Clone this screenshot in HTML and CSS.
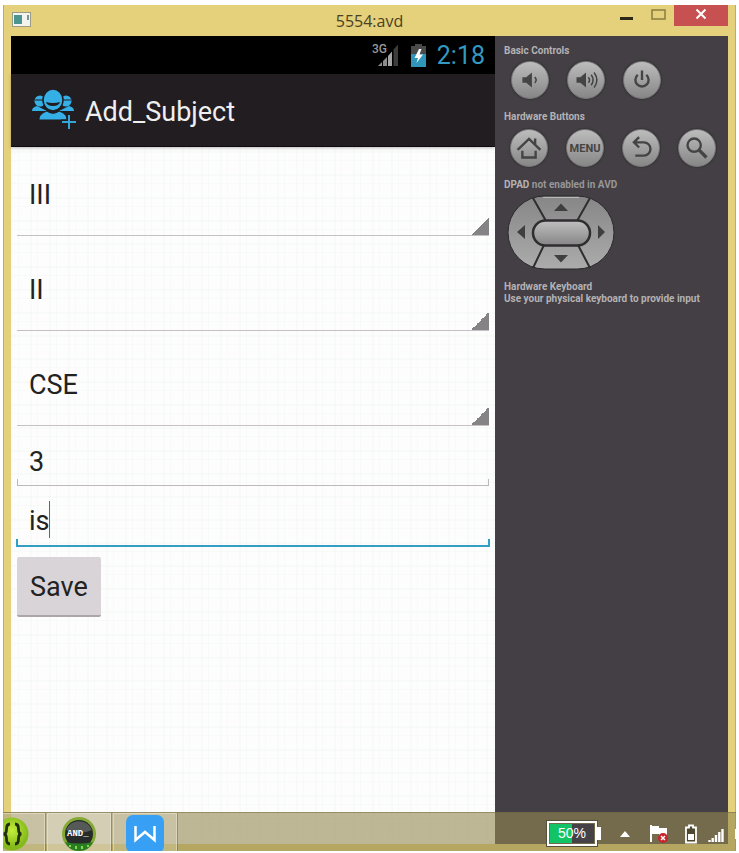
FILE: index.html
```html
<!DOCTYPE html>
<html lang="en">
<head>
<meta charset="utf-8">
<title>5554:avd</title>
<link rel="stylesheet" href="styles.css">
</head>
<body>
<main class="window">
  <header class="titlebar">
    <svg class="app-icon" width="19" height="15" viewBox="0 0 19 15">
      <rect x=".5" y=".5" width="18" height="14" fill="#f4f4ee" stroke="#9c9c86"/>
      <rect x="2" y="3" width="8" height="9" fill="#4c9490"/>
      <rect x="15" y="3" width="2" height="5" fill="#7894a0"/>
    </svg>
    <h1 class="window-title">5554:avd</h1>
    <div class="window-buttons">
      <button class="win-btn" aria-label="Minimize"><svg width="13" height="20"><rect y="12" width="13" height="3" fill="#2c2716"/></svg></button>
      <button class="win-btn" aria-label="Maximize"><svg width="15" height="20"><rect x="1" y="5" width="13" height="9" fill="none" stroke="#8f8144" stroke-width="1.6"/></svg></button>
      <button class="win-btn close" aria-label="Close"><svg width="12" height="20"><path d="M1.500 4.500 10.500 13.500M10.500 4.500 1.500 13.500" stroke="#fff" stroke-width="2"/></svg></button>
    </div>
  </header>
  <div class="emulator">
    <section class="phone">
      <div class="statusbar">
        <svg width="28" height="26" viewBox="0 0 28 26">
          <text x="0" y="11" class="net">3G</text>
          <path d="M6 24 10 20V24ZM11 19 15 15V24H11Z" fill="#8c8c8c"/>
          <path d="M16 14 20 9.500V24H16Z" fill="#a6a6a6"/>
          <path d="M21.500 7.500 26 2.500V24H21.500Z" fill="#3c3c3c"/>
        </svg>
        <svg width="17" height="26" viewBox="0 0 17 26">
          <path d="M5 2h7v2h4v21H1V4h4Z" fill="#4a4a4a"/>
          <path d="M1 12h15v13H1Z" fill="#2f95bb"/>
          <path d="M9 7 4.500 16H8L6.500 21 13 12.500H9.500L11.500 7Z" fill="#fff"/>
        </svg>
        <span class="clock">2:18</span>
      </div>
      <div class="actionbar">
        <svg width="46" height="42" viewBox="0 0 46 42">
          <g fill="#35b0e6">
            <circle cx="9" cy="12" r="5.500"/><circle cx="35" cy="12" r="5.500"/>
            <path d="M1 22c0-3 2-4 5-5l4 2 6 3ZM43 22c0-3-2-4-5-5l-4 2-6 3Z"/>
            <path d="M4 11h10M30 11h10" stroke="#211d21" stroke-width="1.200"/>
            <ellipse cx="22" cy="11" rx="10" ry="11" stroke="#211d21" stroke-width="1.500"/>
            <path d="M8 31c0-5 3-7 8-9 4 3 8 3 12 0 5 2 8 4 8 9Z" stroke="#211d21" stroke-width="1"/>
            <path d="M15 13q7 2 14 0-1 4-7 4t-7-4Z" fill="#211d21"/>
          </g>
          <path d="M38 25v16M30 33h16" stroke="#211d21" stroke-width="5"/>
          <path d="M38 26v14M31 33h14" stroke="#35a5d8" stroke-width="2"/>
        </svg>
        <h2 class="screen-title">Add_Subject</h2>
      </div>
      <form class="form">
        <select class="spinner" aria-label="Year"><option>III</option></select>
        <select class="spinner" aria-label="Semester"><option>II</option></select>
        <select class="spinner" aria-label="Branch"><option>CSE</option></select>
        <div class="field"><input type="text" aria-label="Count" value="3"></div>
        <div class="field active"><input type="text" aria-label="Subject" value="is"><i class="caret"></i></div>
        <button type="button" class="save">Save</button>
      </form>
    </section>
    <aside class="controls">
      <h3>Basic Controls</h3>
      <div class="keys">
        <button class="key" aria-label="Volume down"><svg viewBox="0 0 38 38"><path d="M11 16h4l6-5v16l-6-5h-4Z" fill="#444"/><path d="M24 16q3 3 0 6" class="ln"/></svg></button>
        <button class="key" aria-label="Volume up"><svg viewBox="0 0 38 38"><path d="M9 16h4l6-5v16l-6-5H9Z" fill="#444"/><path d="M21.500 16q2.500 3 0 6M24.500 13.500q4 5.500 0 11M27.500 11q6 8 0 16" class="ln"/></svg></button>
        <button class="key" aria-label="Power"><svg viewBox="0 0 38 38"><path d="M14.500 13.500a7 7 0 1 0 9 0M19 9v10" class="ln thick"/></svg></button>
      </div>
      <h3>Hardware Buttons</h3>
      <div class="keys">
        <button class="key" aria-label="Home"><svg viewBox="0 0 38 38"><path d="M7 21 19 9.500 31 21M12 22v7h14v-7M25.500 15V9" class="ln thick"/></svg></button>
        <button class="key menu">MENU</button>
        <button class="key" aria-label="Back"><svg viewBox="0 0 38 38"><path d="M17 7.500 11.500 13 17 18.500M12 13h10a7 7 0 0 1 0 14H13" class="ln thick"/></svg></button>
        <button class="key" aria-label="Search"><svg viewBox="0 0 38 38"><circle cx="16" cy="16" r="7" class="ln thick"/><path d="M21 21 29 29" class="ln handle"/></svg></button>
      </div>
      <h3>DPAD <span>not enabled in AVD</span></h3>
      <svg class="dpad" width="108" height="75" viewBox="0 0 108 75">
        <defs>
          <linearGradient id="pad" x2="0" y2="1"><stop stop-color="#868686"/><stop offset="1" stop-color="#acacac"/></linearGradient>
          <linearGradient id="mid" x2="0" y2="1"><stop stop-color="#c0c0c0"/><stop offset="1" stop-color="#858585"/></linearGradient>
        </defs>
        <rect x="1" y="1" width="106" height="73" rx="36.500" fill="url(#pad)" stroke="#2c2a2c"/>
        <path d="M36 2.500H72" stroke="#b8b8b8"/>
        <path d="M26 3 39 26M83 3 70 26M26 73 37 50M83 73 71 50" stroke="#2f2d2f" stroke-width="2"/>
        <rect x="26" y="25.500" width="57" height="25" rx="12.500" fill="url(#mid)" stroke="#2f2d2f" stroke-width="2.500"/>
        <path d="M47 16 54 8.500 61 16ZM47 60h14l-7 7.500ZM18 30v14l-8-7ZM91 30v14l7-7Z" fill="#3f3f3f"/>
      </svg>
      <h3>Hardware Keyboard<br>Use your physical keyboard to provide input</h3>
    </aside>
  </div>
</main>
<footer class="taskbar">
  <button class="task first" aria-label="Brackets">
    <svg width="26" height="34" viewBox="0 0 26 34">
      <defs><radialGradient id="lime" cy=".4"><stop stop-color="#c4ee3c"/><stop offset="1" stop-color="#83b91a"/></radialGradient></defs>
      <circle cx="9" cy="17" r="16.500" fill="url(#lime)"/>
      <path d="M7 7q-3.500 0-3.500 5 0 5-3 5 3 0 3 5 0 5 3.500 5M12 7q3.500 0 3.500 5 0 5 3 5-3 0-3 5 0 5-3.500 5" fill="none" stroke="#23300c" stroke-width="2.800"/>
    </svg>
  </button>
  <button class="task current" aria-label="Android emulator">
    <svg width="34" height="34" viewBox="0 0 34 34">
      <circle cx="17" cy="17" r="17" fill="#84a934"/>
      <circle cx="17" cy="17" r="14" fill="#262a28"/>
      <path d="M4 13a14 14 0 0 1 26 0q-13 6-26 0Z" fill="#555958"/>
      <path d="M3 25q14 3 28 0-4 9-14 9T3 25Z" fill="#2b7d24"/>
      <path d="M8 28v2M14 29v3M20 29v3M26 28v2" stroke="#82d94a" stroke-width="2"/>
      <text x="5" y="19" class="and">AND_</text>
    </svg>
  </button>
  <button class="task" aria-label="Writer">
    <svg width="38" height="36" viewBox="0 0 38 36">
      <rect width="38" height="38" rx="7" fill="#37a0f4"/>
      <path d="M9.500 11v14l9.500-8 9.500 8V11" fill="none" stroke="#fff" stroke-width="2.500"/>
    </svg>
  </button>
  <div class="tray">
    <div class="battery"><span>50%</span></div>
    <svg class="up" width="10" height="6"><path d="M0 6 5 0l5 6Z" fill="#fff"/></svg>
    <svg class="flag" width="18" height="20" viewBox="0 0 18 20">
      <path d="M1 1v17" stroke="#fff" stroke-width="2"/>
      <path d="M2 2h7v2h8v8H9v-2H2Z" fill="#fff"/>
      <circle cx="13" cy="14" r="5" fill="#c8242b"/>
      <path d="m11 12 4 4m0-4-4 4" stroke="#fff" stroke-width="1.500"/>
    </svg>
    <svg class="cell" width="12" height="20" viewBox="0 0 12 20">
      <path d="M4 1.500h4v2h3v15H1v-15h3Z" fill="#4c472e" stroke="#fff" stroke-width="1.800"/>
      <path d="M3 10h6v6H3Z" fill="#fff"/>
    </svg>
    <svg class="bars" width="16" height="13" viewBox="0 0 16 13"><path d="M1.500 13v-2M4.700 13V9M8 13V6M11.300 13V3M14.500 13V0" stroke="#fff" stroke-width="2.400"/></svg>
    <span class="edge"></span>
  </div>
</footer>
</body>
</html>
```
FILE: styles.css
```css
* { box-sizing: border-box; }
body {
  margin: 0;
  padding: 5px 3px 2px;
  min-height: 100vh;
  display: flex;
  position: relative;
  background: #fff;
  font-family: Roboto, sans-serif;
}
button, input, select { font: inherit; margin: 0; padding: 0; border: 0; background: none; }
h1, h2, h3 { margin: 0; font-weight: 400; }
svg { display: block; }

.window {
  flex: 1;
  display: flex;
  flex-direction: column;
  padding: 0 7px 7px;
  background: #e5d17b;
  border: 1px solid #b9ac70;
  border-width: 0 1px;
}
.titlebar {
  height: 31px;
  display: grid;
  grid-template-columns: 1fr auto 1fr;
  align-items: center;
}
.app-icon { margin: 0 0 3px 1px; }
.window-title { font: 16px/30px "Open Sans", sans-serif; color: #4a4023; }
.window-buttons { display: flex; justify-content: flex-end; align-self: start; }
.win-btn { width: 32px; height: 21px; display: flex; justify-content: center; }
.close { width: 54px; background: #c75050; }

.emulator { flex: 1; display: flex; }
.phone {
  flex: 1;
  min-width: 0;
  display: flex;
  flex-direction: column;
  background-color: #fdfdfd;
  background-image:
    repeating-linear-gradient(90deg, rgba(215, 232, 222, .12) 0 2px, transparent 2px 7px, rgba(215, 232, 222, .12) 7px 8px, transparent 8px 19px),
    repeating-linear-gradient(rgba(215, 232, 222, .12) 0 2px, transparent 2px 9px, rgba(215, 232, 222, .12) 9px 10px, transparent 10px 23px);
}
.statusbar {
  height: 38px;
  padding-right: 10px;
  display: flex;
  align-items: center;
  justify-content: flex-end;
  gap: 10px;
  background: #000;
}
.net { font: 500 12px Roboto, sans-serif; fill: #9a9a9a; }
.clock { font-size: 25px; line-height: 38px; padding-top: 2px; color: #3299c0; }
.actionbar {
  height: 73px;
  padding-left: 20px;
  display: flex;
  align-items: center;
  gap: 8px;
  background: #211d21;
  border-bottom: 1px solid #0d0b0d;
  box-shadow: 0 1px 3px rgba(0, 0, 0, .25);
}
.screen-title { font-size: 27px; line-height: 32px; padding-top: 3px; color: #efefef; }

.form {
  padding: 6px 5px;
  display: flex;
  flex-direction: column;
  align-items: stretch;
  font-size: 27px;
  color: #222;
}
.spinner {
  appearance: none;
  height: 83px;
  margin: 0 1px 12px;
  padding: 2px 0 0 12px;
  color: #222;
  border-bottom: 1px solid #c4c0c4;
  border-radius: 0;
  background: linear-gradient(135deg, transparent 50%, #858385 50%) right bottom / 18px 18px no-repeat;
}
.field {
  position: relative;
  height: 59px;
  padding-top: 12px;
  margin: 0 1px;
}
.spinner + .field { margin-top: -12px; }
.field::after {
  content: "";
  display: block;
  height: 6px;
  margin-top: -6px;
  border: 1px solid #bdb8bd;
  border-top: 0;
}
.active { height: 60px; margin: 0; }
.active::after { border-color: #349fc4; border-width: 0 2px 2px; }
.field input {
  display: block;
  width: 100%;
  height: 47px;
  padding-left: 12px;
  color: #222;
  outline: 0;
}
.active input { height: 48px; padding-left: 13px; }
.caret { position: absolute; left: 33px; top: 16px; width: 1px; height: 37px; background: #66666a; }
.save {
  align-self: flex-start;
  margin: 12px 1px;
  padding: 2px 13px 0;
  height: 60px;
  color: #222;
  background: #d8d4d8;
  border-bottom: 2px solid #aaa6aa;
  border-radius: 2px;
}

.controls {
  width: 233px;
  padding: 9px;
  background: #433f44;
}
.controls h3 { font-size: 10px; line-height: 12px; font-weight: 700; color: #b4b2b4; white-space: nowrap; }
.controls h3 span { color: #989698; }
.keys { display: flex; gap: 18px; margin: 4px 0 12px 7px; }
.keys + h3 + .keys { margin: 6px 0 12px 6px; }
.key {
  flex: none;
  width: 38px;
  height: 38px;
  border-radius: 50%;
  background: linear-gradient(#bcbcbc, #868686);
  border: 1px solid #777;
  box-shadow: 0 0 2px #222;
}
.key svg { width: 36px; height: 36px; }
.ln { fill: none; stroke: #444; stroke-width: 1.6; }
.thick { stroke-width: 2.5; }
.handle { stroke-width: 3.5; }
.menu { font-size: 11px; font-weight: 700; color: #444; }
.dpad { margin: 4px 0 11px 3px; }

.taskbar {
  position: absolute;
  left: 3px;
  right: 3px;
  bottom: 2px;
  height: 39px;
  display: flex;
  gap: 2px;
  background: rgba(148, 136, 81, .6);
  border-top: 1px solid rgba(110, 100, 60, .5);
}
.task {
  width: 64px;
  display: flex;
  align-items: flex-end;
  justify-content: center;
  background: rgba(225, 218, 195, .3);
  border: 1px solid rgba(240, 235, 215, .5);
  border-width: 1px 1px 0;
  box-shadow: 1px 0 0 rgba(90, 80, 45, .4);
}
.first { width: 42px; justify-content: flex-start; border-left: 0; }
.current { background: rgba(240, 236, 220, .45); }
.and { font: 700 9px "Liberation Mono", monospace; fill: #fff; }
.tray { margin-left: auto; display: flex; align-items: center; }
.battery {
  position: relative;
  width: 50px;
  height: 25px;
  margin: 3px 23px 0 0;
  border: 2px solid #fff;
  outline: 1px solid #55503a;
  background: linear-gradient(90deg, #12c466 50%, #454146 50%) content-box #454146;
  padding: 1px;
  text-align: center;
  font: 14px/19px "Liberation Sans", sans-serif;
  color: #fff;
}
.battery::after { content: ""; position: absolute; right: -6px; top: 4px; width: 4px; height: 13px; background: #fff; }
.up { margin: 4px 20px 0 0; }
.flag { margin: 4px 17px 0 0; }
.cell { margin: 4px 11px 0 0; }
.bars { margin: 6px 11px 0 0; }
.edge { width: 1px; height: 10px; margin-top: 4px; background: #fff; }
```
